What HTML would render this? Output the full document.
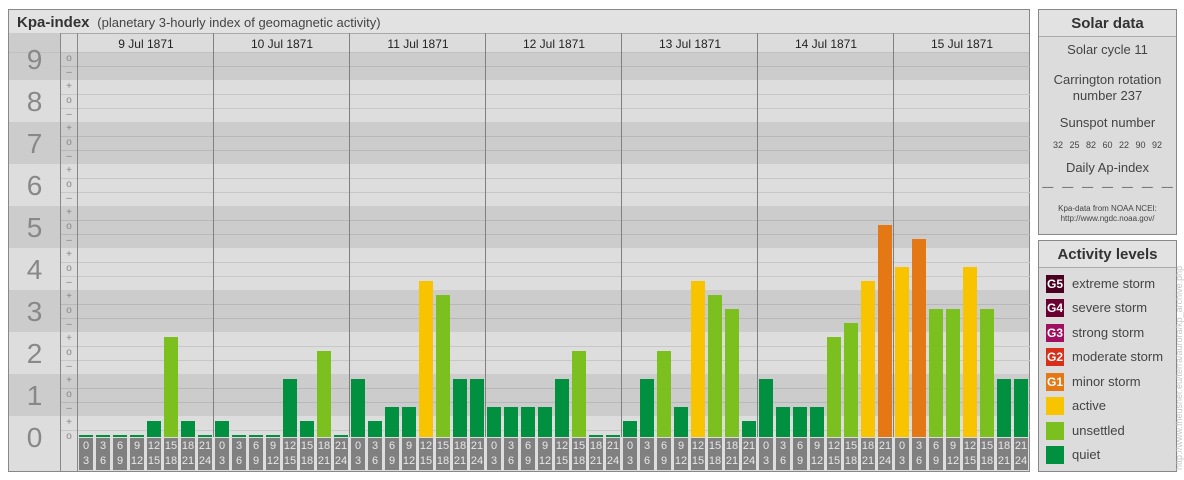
<!DOCTYPE html>
<html><head><meta charset="utf-8"><style>
*{margin:0;padding:0;box-sizing:border-box}
body{width:1184px;height:480px;background:#fff;position:relative;overflow:hidden;font-family:"Liberation Sans",sans-serif}
div{position:absolute}
.b{width:14px}
.q{background:#009040}.u{background:#7cc020}.a{background:#f8c400}.o{background:#e47814}
.lb{width:14px;top:438px;height:32px;background:#808080;color:#e8e8e8;font-size:11px;line-height:15px;text-align:center;padding-top:1px}
.gl{left:60px;width:970px;height:1px}
.tk{left:61px;width:16px;font-size:10px;color:#888;text-align:center;height:12px;line-height:12px}
.nm{left:9px;width:51px;font-size:28px;color:#888;text-align:center;height:30px;line-height:30px}
.dl{top:33px;width:1px;height:404px;background:#808080}
.dh{top:37px;width:136px;text-align:center;font-size:12px;color:#222}
.lg{left:1046px;width:18px;height:18px;color:#fff;font-size:12px;font-weight:bold;text-align:center;line-height:18px}
.lt{left:1072px;font-size:13px;color:#444;line-height:18px}
.st{left:1039px;width:137px;text-align:center;font-size:13px;color:#444;line-height:16px}
</style></head><body>
<div style="left:8px;top:9px;width:1022px;height:463px;border:1px solid #888;background:#dcdcdc"></div>
<div style="left:9px;top:10px;width:1020px;height:24px;background:#e2e2e2;border-bottom:1px solid #aaa"></div>
<div style="left:17px;top:14px;font-size:15px;color:#333"><b>Kpa-index</b> <span style="font-size:13px;color:#444">&nbsp;(planetary 3-hourly index of geomagnetic activity)</span></div>
<div style="left:9px;top:52px;width:1020px;height:28px;background:#cccccc"></div>
<div style="left:9px;top:80px;width:1020px;height:42px;background:#dddddd"></div>
<div style="left:9px;top:122px;width:1020px;height:42px;background:#cccccc"></div>
<div style="left:9px;top:164px;width:1020px;height:42px;background:#dddddd"></div>
<div style="left:9px;top:206px;width:1020px;height:42px;background:#cccccc"></div>
<div style="left:9px;top:248px;width:1020px;height:42px;background:#dddddd"></div>
<div style="left:9px;top:290px;width:1020px;height:42px;background:#cccccc"></div>
<div style="left:9px;top:332px;width:1020px;height:42px;background:#dddddd"></div>
<div style="left:9px;top:374px;width:1020px;height:42px;background:#cccccc"></div>
<div style="left:9px;top:416px;width:1020px;height:55px;background:#dddddd"></div>
<div class="gl" style="top:66px;background:#b8b8b8"></div>
<div class="gl" style="top:94px;background:#c8c8c8"></div><div class="gl" style="top:108px;background:#c8c8c8"></div>
<div class="gl" style="top:136px;background:#b8b8b8"></div><div class="gl" style="top:150px;background:#b8b8b8"></div>
<div class="gl" style="top:178px;background:#c8c8c8"></div><div class="gl" style="top:192px;background:#c8c8c8"></div>
<div class="gl" style="top:220px;background:#b8b8b8"></div><div class="gl" style="top:234px;background:#b8b8b8"></div>
<div class="gl" style="top:262px;background:#c8c8c8"></div><div class="gl" style="top:276px;background:#c8c8c8"></div>
<div class="gl" style="top:304px;background:#b8b8b8"></div><div class="gl" style="top:318px;background:#b8b8b8"></div>
<div class="gl" style="top:346px;background:#c8c8c8"></div><div class="gl" style="top:360px;background:#c8c8c8"></div>
<div class="gl" style="top:388px;background:#b8b8b8"></div><div class="gl" style="top:402px;background:#b8b8b8"></div>
<div class="gl" style="top:430px;background:#c8c8c8"></div>
<div style="left:9px;top:33px;width:1020px;height:1px;background:#aaa"></div>
<div style="left:9px;top:52px;width:1020px;height:1px;background:#c0c0c0"></div>
<div style="left:9px;top:33px;width:51px;height:19px;background:#cccccc"></div>
<div style="left:60px;top:33px;width:1px;height:438px;background:#888"></div>
<div style="left:77px;top:33px;width:1px;height:438px;background:#888"></div>
<div class="dl" style="left:213px"></div><div class="dl" style="left:349px"></div><div class="dl" style="left:485px"></div><div class="dl" style="left:621px"></div><div class="dl" style="left:757px"></div><div class="dl" style="left:893px"></div>
<div class="nm" style="top:45px">9</div><div class="nm" style="top:87px">8</div><div class="nm" style="top:129px">7</div><div class="nm" style="top:171px">6</div><div class="nm" style="top:213px">5</div><div class="nm" style="top:255px">4</div><div class="nm" style="top:297px">3</div><div class="nm" style="top:339px">2</div><div class="nm" style="top:381px">1</div><div class="nm" style="top:423px">0</div>
<div class="tk" style="top:53px">o</div><div class="tk" style="top:67px">–</div>
<div class="tk" style="top:81px">+</div><div class="tk" style="top:95px">o</div><div class="tk" style="top:109px">–</div>
<div class="tk" style="top:123px">+</div><div class="tk" style="top:137px">o</div><div class="tk" style="top:151px">–</div>
<div class="tk" style="top:165px">+</div><div class="tk" style="top:179px">o</div><div class="tk" style="top:193px">–</div>
<div class="tk" style="top:207px">+</div><div class="tk" style="top:221px">o</div><div class="tk" style="top:235px">–</div>
<div class="tk" style="top:249px">+</div><div class="tk" style="top:263px">o</div><div class="tk" style="top:277px">–</div>
<div class="tk" style="top:291px">+</div><div class="tk" style="top:305px">o</div><div class="tk" style="top:319px">–</div>
<div class="tk" style="top:333px">+</div><div class="tk" style="top:347px">o</div><div class="tk" style="top:361px">–</div>
<div class="tk" style="top:375px">+</div><div class="tk" style="top:389px">o</div><div class="tk" style="top:403px">–</div>
<div class="tk" style="top:417px">+</div><div class="tk" style="top:431px">o</div>
<div class="dh" style="left:78px">9 Jul 1871</div><div class="dh" style="left:214px">10 Jul 1871</div><div class="dh" style="left:350px">11 Jul 1871</div><div class="dh" style="left:486px">12 Jul 1871</div><div class="dh" style="left:622px">13 Jul 1871</div><div class="dh" style="left:758px">14 Jul 1871</div><div class="dh" style="left:894px">15 Jul 1871</div>
<div class="b q" style="left:79px;top:435px;height:2px"></div><div class="b q" style="left:96px;top:435px;height:2px"></div><div class="b q" style="left:113px;top:435px;height:2px"></div><div class="b q" style="left:130px;top:435px;height:2px"></div><div class="b q" style="left:147px;top:421px;height:16px"></div><div class="b u" style="left:164px;top:337px;height:100px"></div><div class="b q" style="left:181px;top:421px;height:16px"></div><div class="b q" style="left:198px;top:435px;height:2px"></div>
<div class="b q" style="left:215px;top:421px;height:16px"></div><div class="b q" style="left:232px;top:435px;height:2px"></div><div class="b q" style="left:249px;top:435px;height:2px"></div><div class="b q" style="left:266px;top:435px;height:2px"></div><div class="b q" style="left:283px;top:379px;height:58px"></div><div class="b q" style="left:300px;top:421px;height:16px"></div><div class="b u" style="left:317px;top:351px;height:86px"></div><div class="b q" style="left:334px;top:435px;height:2px"></div>
<div class="b q" style="left:351px;top:379px;height:58px"></div><div class="b q" style="left:368px;top:421px;height:16px"></div><div class="b q" style="left:385px;top:407px;height:30px"></div><div class="b q" style="left:402px;top:407px;height:30px"></div><div class="b a" style="left:419px;top:281px;height:156px"></div><div class="b u" style="left:436px;top:295px;height:142px"></div><div class="b q" style="left:453px;top:379px;height:58px"></div><div class="b q" style="left:470px;top:379px;height:58px"></div>
<div class="b q" style="left:487px;top:407px;height:30px"></div><div class="b q" style="left:504px;top:407px;height:30px"></div><div class="b q" style="left:521px;top:407px;height:30px"></div><div class="b q" style="left:538px;top:407px;height:30px"></div><div class="b q" style="left:555px;top:379px;height:58px"></div><div class="b u" style="left:572px;top:351px;height:86px"></div><div class="b q" style="left:589px;top:435px;height:2px"></div><div class="b q" style="left:606px;top:435px;height:2px"></div>
<div class="b q" style="left:623px;top:421px;height:16px"></div><div class="b q" style="left:640px;top:379px;height:58px"></div><div class="b u" style="left:657px;top:351px;height:86px"></div><div class="b q" style="left:674px;top:407px;height:30px"></div><div class="b a" style="left:691px;top:281px;height:156px"></div><div class="b u" style="left:708px;top:295px;height:142px"></div><div class="b u" style="left:725px;top:309px;height:128px"></div><div class="b q" style="left:742px;top:421px;height:16px"></div>
<div class="b q" style="left:759px;top:379px;height:58px"></div><div class="b q" style="left:776px;top:407px;height:30px"></div><div class="b q" style="left:793px;top:407px;height:30px"></div><div class="b q" style="left:810px;top:407px;height:30px"></div><div class="b u" style="left:827px;top:337px;height:100px"></div><div class="b u" style="left:844px;top:323px;height:114px"></div><div class="b a" style="left:861px;top:281px;height:156px"></div><div class="b o" style="left:878px;top:225px;height:212px"></div>
<div class="b a" style="left:895px;top:267px;height:170px"></div><div class="b o" style="left:912px;top:239px;height:198px"></div><div class="b u" style="left:929px;top:309px;height:128px"></div><div class="b u" style="left:946px;top:309px;height:128px"></div><div class="b a" style="left:963px;top:267px;height:170px"></div><div class="b u" style="left:980px;top:309px;height:128px"></div><div class="b q" style="left:997px;top:379px;height:58px"></div><div class="b q" style="left:1014px;top:379px;height:58px"></div>
<div class="lb" style="left:79px">0<br>3</div><div class="lb" style="left:96px">3<br>6</div><div class="lb" style="left:113px">6<br>9</div><div class="lb" style="left:130px">9<br>12</div><div class="lb" style="left:147px">12<br>15</div><div class="lb" style="left:164px">15<br>18</div><div class="lb" style="left:181px">18<br>21</div><div class="lb" style="left:198px">21<br>24</div>
<div class="lb" style="left:215px">0<br>3</div><div class="lb" style="left:232px">3<br>6</div><div class="lb" style="left:249px">6<br>9</div><div class="lb" style="left:266px">9<br>12</div><div class="lb" style="left:283px">12<br>15</div><div class="lb" style="left:300px">15<br>18</div><div class="lb" style="left:317px">18<br>21</div><div class="lb" style="left:334px">21<br>24</div>
<div class="lb" style="left:351px">0<br>3</div><div class="lb" style="left:368px">3<br>6</div><div class="lb" style="left:385px">6<br>9</div><div class="lb" style="left:402px">9<br>12</div><div class="lb" style="left:419px">12<br>15</div><div class="lb" style="left:436px">15<br>18</div><div class="lb" style="left:453px">18<br>21</div><div class="lb" style="left:470px">21<br>24</div>
<div class="lb" style="left:487px">0<br>3</div><div class="lb" style="left:504px">3<br>6</div><div class="lb" style="left:521px">6<br>9</div><div class="lb" style="left:538px">9<br>12</div><div class="lb" style="left:555px">12<br>15</div><div class="lb" style="left:572px">15<br>18</div><div class="lb" style="left:589px">18<br>21</div><div class="lb" style="left:606px">21<br>24</div>
<div class="lb" style="left:623px">0<br>3</div><div class="lb" style="left:640px">3<br>6</div><div class="lb" style="left:657px">6<br>9</div><div class="lb" style="left:674px">9<br>12</div><div class="lb" style="left:691px">12<br>15</div><div class="lb" style="left:708px">15<br>18</div><div class="lb" style="left:725px">18<br>21</div><div class="lb" style="left:742px">21<br>24</div>
<div class="lb" style="left:759px">0<br>3</div><div class="lb" style="left:776px">3<br>6</div><div class="lb" style="left:793px">6<br>9</div><div class="lb" style="left:810px">9<br>12</div><div class="lb" style="left:827px">12<br>15</div><div class="lb" style="left:844px">15<br>18</div><div class="lb" style="left:861px">18<br>21</div><div class="lb" style="left:878px">21<br>24</div>
<div class="lb" style="left:895px">0<br>3</div><div class="lb" style="left:912px">3<br>6</div><div class="lb" style="left:929px">6<br>9</div><div class="lb" style="left:946px">9<br>12</div><div class="lb" style="left:963px">12<br>15</div><div class="lb" style="left:980px">15<br>18</div><div class="lb" style="left:997px">18<br>21</div><div class="lb" style="left:1014px">21<br>24</div>
<div style="left:1038px;top:9px;width:139px;height:226px;border:1px solid #888;background:#dcdcdc"></div>
<div style="left:1039px;top:10px;width:137px;height:27px;background:#e2e2e2;border-bottom:1px solid #aaa;font-size:15px;font-weight:bold;color:#333;text-align:center;line-height:27px">Solar data</div>
<div class="st" style="top:42px">Solar cycle 11</div>
<div class="st" style="top:72px">Carrington rotation<br>number 237</div>
<div class="st" style="top:115px">Sunspot number</div>
<div class="st" style="top:137px;font-size:9px;word-spacing:4px">32 25 82 60 22 90 92</div>
<div class="st" style="top:160px">Daily Ap-index</div>
<div class="st" style="top:180px;font-size:10px;word-spacing:6px">–– –– –– –– –– –– ––</div>
<div class="st" style="top:204px;font-size:8px;line-height:10px">Kpa-data from NOAA NCEI:<br>http://www.ngdc.noaa.gov/</div>
<div style="left:1038px;top:240px;width:139px;height:232px;border:1px solid #888;background:#dcdcdc"></div>
<div style="left:1039px;top:241px;width:137px;height:27px;background:#e2e2e2;border-bottom:1px solid #aaa;font-size:15px;font-weight:bold;color:#333;text-align:center;line-height:27px">Activity levels</div>
<div class="lg" style="top:275px;background:#4a0020">G5</div><div class="lt" style="top:275px">extreme storm</div>
<div class="lg" style="top:299px;background:#6a0030">G4</div><div class="lt" style="top:299px">severe storm</div>
<div class="lg" style="top:324px;background:#a01060">G3</div><div class="lt" style="top:324px">strong storm</div>
<div class="lg" style="top:348px;background:#d83018">G2</div><div class="lt" style="top:348px">moderate storm</div>
<div class="lg" style="top:373px;background:#e47814">G1</div><div class="lt" style="top:373px">minor storm</div>
<div class="lg" style="top:397px;background:#f8c400"></div><div class="lt" style="top:397px">active</div>
<div class="lg" style="top:422px;background:#7cc020"></div><div class="lt" style="top:422px">unsettled</div>
<div class="lg" style="top:446px;background:#009040"></div><div class="lt" style="top:446px">quiet</div>
<div style="left:1174px;top:470px;width:230px;transform:rotate(-90deg);transform-origin:0 0;font-size:9px;color:#c4c4c4;white-space:nowrap">http://www.fheusner.eu/terra/aurora/kp_archive.php</div>
</body></html>
